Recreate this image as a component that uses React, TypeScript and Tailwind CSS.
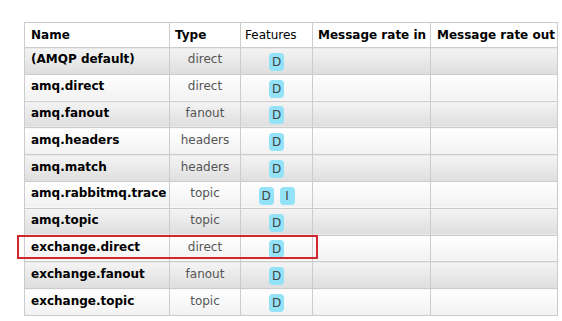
type Row = { name: string; type: string; features: string[] }

const rows: Row[] = [
  { name: '(AMQP default)', type: 'direct', features: ['D'] },
  { name: 'amq.direct', type: 'direct', features: ['D'] },
  { name: 'amq.fanout', type: 'fanout', features: ['D'] },
  { name: 'amq.headers', type: 'headers', features: ['D'] },
  { name: 'amq.match', type: 'headers', features: ['D'] },
  { name: 'amq.rabbitmq.trace', type: 'topic', features: ['D', 'I'] },
  { name: 'amq.topic', type: 'topic', features: ['D'] },
  { name: 'exchange.direct', type: 'direct', features: ['D'] },
  { name: 'exchange.fanout', type: 'fanout', features: ['D'] },
  { name: 'exchange.topic', type: 'topic', features: ['D'] },
]

function Badge({ label }: { label: string }) {
  return (
    <span className="inline-flex h-[18px] w-[15px] items-center justify-center rounded-[4px] bg-[#93e2f8] text-[12px] leading-none text-[#444]">
      {label}
    </span>
  )
}

export default function App() {
  return (
    <div
      className="relative h-[321px] w-[562px] bg-white pl-[24px] pt-[22px]"
      style={{ fontFamily: '"DejaVu Sans", Verdana, sans-serif' }}
    >
      <table className="w-[533px] table-fixed border-collapse text-[12px] text-black">
        <colgroup>
          <col className="w-[145px]" />
          <col className="w-[71px]" />
          <col className="w-[72px]" />
          <col className="w-[118px]" />
          <col className="w-[127px]" />
        </colgroup>
        <thead>
          <tr className="h-[25px] whitespace-nowrap">
            <th className="border border-[#cccccc] pl-[6px] text-left font-bold">Name</th>
            <th className="border border-[#cccccc] pl-[5px] text-left font-bold">Type</th>
            <th className="border border-[#cccccc] pl-[4px] text-left font-normal">Features</th>
            <th className="border border-[#cccccc] pl-[5px] text-left font-bold">Message rate in</th>
            <th className="border border-[#cccccc] pl-[6px] text-left font-bold">Message rate out</th>
          </tr>
        </thead>
        <tbody>
          {rows.map((r, i) => {
            const bg =
              i % 2 === 0
                ? 'bg-linear-to-b from-[#f4f4f4] to-[#dedede]'
                : 'bg-linear-to-b from-white to-[#f2f2f2]'
            return (
              <tr key={r.name} className="h-[26.8px]">
                <td className={`border border-[#cccccc] px-[6px] pb-[3px] font-bold whitespace-nowrap ${bg}`}>{r.name}</td>
                <td className={`border border-[#cccccc] pb-[3px] text-center text-[#555] ${bg}`}>{r.type}</td>
                <td className={`border border-[#cccccc] pt-[2px] text-center ${bg}`}>
                  <div className="flex justify-center gap-[6px]">
                    {r.features.map((f) => (
                      <Badge key={f} label={f} />
                    ))}
                  </div>
                </td>
                <td className={`border border-[#cccccc] ${bg}`}></td>
                <td className={`border border-[#cccccc] ${bg}`}></td>
              </tr>
            )
          })}
        </tbody>
      </table>
      <div className="absolute left-[17px] top-[235px] h-[24px] w-[301px] border-2 border-[#d0282e]" />
    </div>
  )
}
